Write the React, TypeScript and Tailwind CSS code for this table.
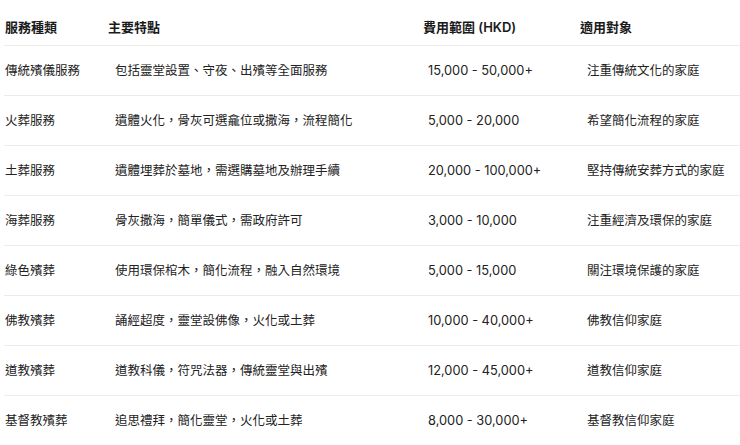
import React from "react";

const rows: [string, string, string, string][] = [
  ["傳統殯儀服務", "包括靈堂設置、守夜、出殯等全面服務", "15,000 - 50,000+", "注重傳統文化的家庭"],
  ["火葬服務", "遺體火化，骨灰可選龕位或撒海，流程簡化", "5,000 - 20,000", "希望簡化流程的家庭"],
  ["土葬服務", "遺體埋葬於墓地，需選購墓地及辦理手續", "20,000 - 100,000+", "堅持傳統安葬方式的家庭"],
  ["海葬服務", "骨灰撒海，簡單儀式，需政府許可", "3,000 - 10,000", "注重經濟及環保的家庭"],
  ["綠色殯葬", "使用環保棺木，簡化流程，融入自然環境", "5,000 - 15,000", "關注環境保護的家庭"],
  ["佛教殯葬", "誦經超度，靈堂設佛像，火化或土葬", "10,000 - 40,000+", "佛教信仰家庭"],
  ["道教殯葬", "道教科儀，符咒法器，傳統靈堂與出殯", "12,000 - 45,000+", "道教信仰家庭"],
  ["基督教殯葬", "追思禮拜，簡化靈堂，火化或土葬", "8,000 - 30,000+", "基督教信仰家庭"],
];

const font = { fontFamily: 'Inter, "Noto Sans CJK TC", sans-serif' };

export default function App() {
  return (
    <div className="w-[740px] h-[445px] bg-white overflow-hidden text-[12.5px] text-[#222]" style={font}>
      <div className="ml-[4px]">
        <div className="grid grid-cols-[103px_315px_157px_1fr] h-[46px] items-end pb-[8px] pl-px border-b border-[#ebebeb] font-semibold text-[#1a1a1a]">
          <div className="text-[13px]">服務種類</div>
          <div className="text-[13px]">主要特點</div>
          <div className="text-[13px]">費用範圍 (HKD)</div>
          <div className="text-[13px]">適用對象</div>
        </div>
        {rows.map((r, i) => (
          <div
            key={i}
            className="grid grid-cols-[103px_315px_157px_1fr] h-[50px] items-center pl-px border-b border-[#ebebeb]"
          >
            <div className="pt-px">{r[0]}</div>
            <div className="pl-[7px] pt-px">{r[1]}</div>
            <div className="pl-[5px] pt-px text-[12.8px]">{r[2]}</div>
            <div className="pl-[7px] pt-px">{r[3]}</div>
          </div>
        ))}
      </div>
    </div>
  );
}
